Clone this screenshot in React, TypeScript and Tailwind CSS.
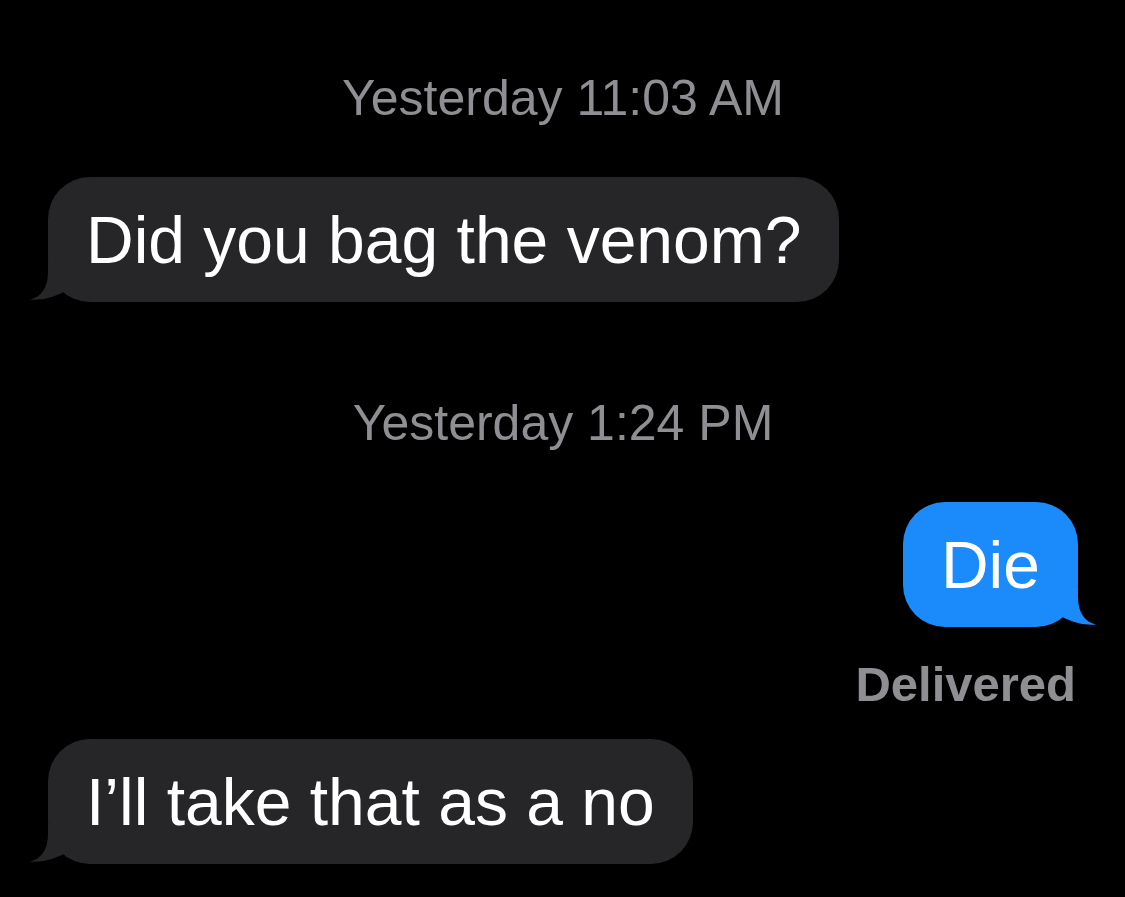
const font = { fontFamily: '"Liberation Sans", Arial, sans-serif' };

const Tail = ({ side, color }: { side: "left" | "right"; color: string }) => (
  <svg
    width="40"
    height="40"
    viewBox="0 0 40 40"
    className={
      side === "left"
        ? "absolute bottom-0 left-[-18px]"
        : "absolute bottom-0 right-[-18px] -scale-x-100"
    }
  >
    <path d="M18 0 L18 10 C18 26 11 35 0 37.5 C10 38.5 22 36 34 30 L34 0 Z" fill={color} />
  </svg>
);

const Stamp = ({ children }: { children: string }) => (
  <div className="h-[50px] text-center text-[50px] leading-[50px] text-[#8e8e93]">
    {children}
  </div>
);

const Bubble = ({
  text,
  side,
}: {
  text: string;
  side: "left" | "right";
}) => {
  const color = side === "left" ? "#262628" : "#1b8afa";
  return (
    <div className={side === "left" ? "flex justify-start" : "flex justify-end"}>
      <div
        className={
          side === "left"
            ? "relative flex h-[125px] items-center rounded-[42px] bg-[#262628] px-[38px]"
            : "relative flex h-[125px] items-center rounded-[42px] bg-[#1b8afa] px-[38px]"
        }
      >
        <Tail side={side} color={color} />
        <span className="relative whitespace-nowrap text-[66px] leading-[66px] text-white">
          {text}
        </span>
      </div>
    </div>
  );
};

export default function App() {
  return (
    <div className="h-[897px] w-[1125px] overflow-hidden bg-black" style={font}>
      <div className="flex flex-col pl-[48px] pr-[47px] pt-[73px]">
        <Stamp>Yesterday 11:03 AM</Stamp>
        <div className="mt-[54px]">
          <Bubble side="left" text="Did you bag the venom?" />
        </div>
        <div className="mt-[96px]">
          <Stamp>Yesterday 1:24 PM</Stamp>
        </div>
        <div className="mt-[54px]">
          <Bubble side="right" text="Die" />
        </div>
        <div className="mt-[33px] h-[49px] pr-[2px] text-right text-[49px] font-semibold leading-[49px] text-[#8e8e93]">
          Delivered
        </div>
        <div className="mt-[30px]">
          <Bubble side="left" text="I’ll take that as a no" />
        </div>
      </div>
    </div>
  );
}
